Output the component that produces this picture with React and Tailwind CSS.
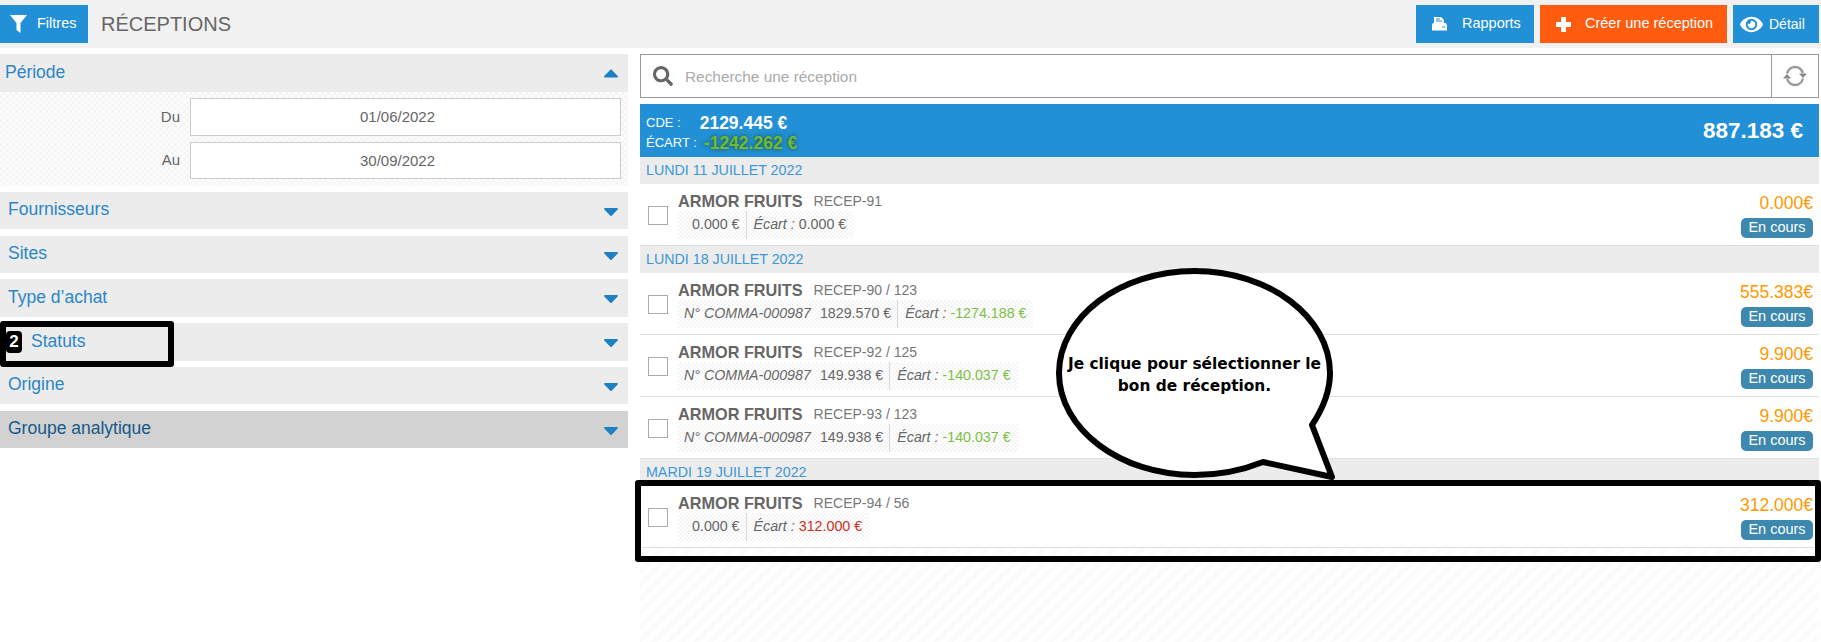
import React from 'react'
import { FaEye, FaSearch, FaCaretUp, FaCaretDown } from 'react-icons/fa'

const filters = [
    { label: 'Fournisseurs', h: 'mt-[6px] h-[37px]' },
    { label: 'Sites', h: 'mt-[7px] h-[37px]' },
    { label: 'Type d’achat', h: 'mt-[6px] h-[38px]' },
    { label: 'Statuts', h: 'mt-[6px] h-[38px]', pad: 'pl-[31px]' },
    { label: 'Origine', h: 'mt-[6px] h-[37px]' },
    { label: 'Groupe analytique', h: 'mt-[7px] h-[37px]', dark: true },
]

const groups = [
    {
        date: 'LUNDI 11 JUILLET 2022',
        rows: [{ ref: 'RECEP-91', amount: '0.000 €', ecart: '0.000 €', total: '0.000€' }],
    },
    {
        date: 'LUNDI 18 JUILLET 2022',
        rows: [
            { ref: 'RECEP-90 / 123', cde: 'N° COMMA-000987', amount: '1829.570 €', ecart: '-1274.188 €', color: 'text-[#7ac143]', total: '555.383€' },
            { ref: 'RECEP-92 / 125', cde: 'N° COMMA-000987', amount: '149.938 €', ecart: '-140.037 €', color: 'text-[#7ac143]', total: '9.900€' },
            { ref: 'RECEP-93 / 123', cde: 'N° COMMA-000987', amount: '149.938 €', ecart: '-140.037 €', color: 'text-[#7ac143]', total: '9.900€' },
        ],
    },
    {
        date: 'MARDI 19 JUILLET 2022',
        rows: [{ ref: 'RECEP-94 / 56', amount: '0.000 €', ecart: '312.000 €', color: 'text-[#c9301a]', total: '312.000€' }],
    },
]

function FunnelIcon() {
    return (
        <svg className="ml-[10px] mr-[10px] shrink-0" width="17" height="18" viewBox="0 0 17 18" fill="#fff">
            <path d="M0 0H17L10.5 8V18L6.5 15V8Z" />
        </svg>
    )
}

function ReportIcon() {
    return (
        <svg className="ml-[16px] mr-[15px] shrink-0" width="15" height="14" viewBox="0 0 15 14" fill="#fff">
            <path d="M2 0H9L12 3V7H2Z" />
            <path d="M4 2H8M4 4H10" stroke="#2290d6" strokeWidth="1" />
            <path d="M1 6H14L15 8V13.5H0V8Z" />
            <path d="M10 10H13" stroke="#2290d6" strokeWidth="1" />
        </svg>
    )
}

function PlusIcon() {
    return (
        <svg className="ml-[16px] mr-[14px] shrink-0" width="15" height="15" viewBox="0 0 15 15" fill="#fff">
            <path d="M5 0h5v5h5v5h-5v5H5v-5H0V5h5z" />
        </svg>
    )
}

function RefreshIcon() {
    return (
        <svg width="24" height="22" viewBox="0 0 24 22" fill="none">
            <path d="M4 8.5C5 4.5 8.5 2 12 2C15.5 2 18.6 4.2 19.8 8" stroke="#999" strokeWidth="2.4" />
            <path d="M20 13.5C19 17.5 15.5 20 12 20C8.5 20 5.400 17.800 4.200 14" stroke="#999" strokeWidth="2.4" />
            <path d="M16 8.500H24L20 13Z" fill="#888" />
            <path d="M0 13.500H8L4 9Z" fill="#888" />
        </svg>
    )
}

function TopButton({ icon, label, className }) {
    return (
        <button className={`flex h-[38px] items-center text-white ${className}`}>
            {icon}
            {label}
        </button>
    )
}

function DateField({ label, value, h }) {
    return (
        <div className={`flex items-center ${h}`}>
            <span className="w-[180px] text-right text-[15px]">{label}</span>
            <div className="ml-[10px] flex h-full w-[431px] items-center justify-center border border-[#ccc] bg-white pr-[16px] pt-[1px] text-[15px]">{value}</div>
        </div>
    )
}

function Row({ row }) {
    return (
        <div className="flex h-[62px] border-b border-[#e0e0e0] bg-white">
            <div className="flex w-[38px] shrink-0 items-center pl-[8px] pt-[1px]">
                <span className="h-[19px] w-[20px] border border-[#aaa] bg-white"></span>
            </div>
            <div className="flex-1 pt-[7px]">
                <div className="flex h-[20px] items-center">
                    <span className="text-[16.25px] font-bold text-[#666]">ARMOR FRUITS</span>
                    <span className="ml-[11px] text-[14px] text-[#777]">{row.ref}</span>
                </div>
                <div className="flex h-[28px] w-fit items-center bg-[repeating-conic-gradient(#f5f5f5_0_25%,#fff_0_50%)] bg-[length:4px_4px] text-[14.25px] text-[#666]">
                    {row.cde ? (
                        <span className="pl-[6px] pr-[9px] italic">{row.cde}</span>
                    ) : (
                        <span className="w-[14px]"></span>
                    )}
                    <span className="pr-[6px]">{row.amount}</span>
                    <span className="flex h-full items-center border-l border-[#d8d8d8] pl-[7px] pr-[7px]">
                        <i>Écart :</i>
                        <span className={`ml-[4px] ${row.color || ''}`}>{row.ecart}</span>
                    </span>
                </div>
            </div>
            <div className="flex shrink-0 flex-col items-end pr-[6px] pt-[8px]">
                <span className="h-[22px] text-[17.5px] leading-[22px] text-[#f90]">{row.total}</span>
                <span className="mt-[4px] flex h-[20px] w-[72px] items-center justify-center rounded-[5px] bg-[#3d88ae] text-[14.5px] text-white">En cours</span>
            </div>
        </div>
    )
}

export default function App() {
    return (
        <div className="relative h-[642px] w-[1821px] overflow-hidden bg-white font-['Liberation_Sans',Arial,sans-serif] text-[#666]">
            <header className="flex h-[48px] items-center bg-[#f1f1f1] pr-[2px]">
                <TopButton
                    icon={<FunnelIcon />}
                    label={<span className="text-[14.5px]">Filtres</span>}
                    className="w-[88px] bg-[#2290d6]"
                />
                <h1 className="ml-[13px] flex-1 text-[20px]">RÉCEPTIONS</h1>
                <TopButton
                    icon={<ReportIcon />}
                    label={<span className="text-[14.5px]">Rapports</span>}
                    className="w-[118px] bg-[#2290d6]"
                />
                <TopButton
                    icon={<PlusIcon />}
                    label={<span className="text-[14.5px]">Créer une réception</span>}
                    className="ml-[6px] w-[187px] bg-[#ff5c10]"
                />
                <TopButton
                    icon={<FaEye className="ml-[7px] mr-[6px] text-[23px]" />}
                    label={<span className="text-[14px]">Détail</span>}
                    className="ml-[6px] w-[86px] bg-[#2290d6]"
                />
            </header>

            <div className="flex">
                <aside className="w-[628px] shrink-0 pt-[6px]">
                    <div className="flex h-[38px] items-center justify-between bg-[#ececec] pl-[5px] pr-[5px] text-[17.5px] text-[#2a86c8]">
                        <span className="pb-[2px]">Période</span>
                        <FaCaretUp className="text-[24px] text-[#1f7fc0]" />
                    </div>
                    <div className="flex h-[94px] flex-col gap-[6px] bg-[repeating-conic-gradient(#f5f5f5_0_25%,#fcfcfc_0_50%)] bg-[length:6px_6px] pt-[6px]">
                        <DateField label="Du" value="01/06/2022" h="h-[38px]" />
                        <DateField label="Au" value="30/09/2022" h="h-[37px]" />
                    </div>
                    <div className="flex flex-col">
                        {filters.map((f) => (
                            <div
                                key={f.label}
                                className={`flex items-center justify-between pr-[5px] text-[17.5px] ${f.h} ${f.pad || 'pl-[8px]'} ${f.dark ? 'bg-[#d2d2d2] text-[#165a8a]' : 'bg-[#ececec] text-[#2a86c8]'}`}
                            >
                                <span className="pb-[2px]">{f.label}</span>
                                <FaCaretDown className="text-[24px] text-[#1f7fc0]" />
                            </div>
                        ))}
                    </div>
                </aside>

                <main className="ml-[12px] w-[1179px] shrink-0 pt-[6px]">
                    <div className="flex h-[44px] items-center border border-[#999] bg-white">
                        <FaSearch className="ml-[12px] text-[20px] text-[#666]" />
                        <span className="ml-[12px] flex-1 pt-[2px] text-[15.4px] text-[#aaa]">Recherche une réception</span>
                        <div className="flex h-[42px] w-[47px] items-center justify-center border-l border-[#999]">
                            <RefreshIcon />
                        </div>
                    </div>
                    <div className="mt-[6px] flex h-[53px] items-center justify-between bg-[#2290d6] pl-[6px] pr-[16px] text-white">
                        <div className="pt-[4px]">
                            <div className="flex h-[21px] items-center text-[13px]">
                                CDE :
                                <span className="ml-[19px] text-[17.5px] font-bold">2129.445 €</span>
                            </div>
                            <div className="flex h-[19px] items-center text-[13px]">
                                ÉCART :
                                <span className="ml-[7px] text-[17.5px] font-bold text-[#6fbb35] [text-shadow:0_0_4px_#1d4d24]">-1242.262 €</span>
                            </div>
                        </div>
                        <span className="text-[22.5px] font-bold">887.183 €</span>
                    </div>
                    <div className="bg-[repeating-linear-gradient(135deg,#fbfbfb_0_5px,#fff_5px_10px)]">
                        {groups.map((g) => (
                            <div key={g.date}>
                                <div className="flex h-[27px] items-center bg-[#ececec] pl-[6px] pt-[1px] text-[14.25px] text-[#3b97d8]">{g.date}</div>
                                {g.rows.map((row) => (
                                    <Row key={row.ref} row={row} />
                                ))}
                            </div>
                        ))}
                        <div className="h-[96px]"></div>
                    </div>
                </main>
            </div>

            {/* annotations drawn over the page */}
            <div className="absolute left-0 top-[321px] h-[46px] w-[174px] rounded-[3px] border-[6px] border-black"></div>
            <span className="absolute left-[6px] top-[331px] flex h-[22px] w-[16px] items-center justify-center rounded-[4px] bg-black text-[17px] font-bold text-white">2</span>
            <div className="absolute left-[635px] top-[480px] h-[82px] w-[1186px] rounded-[3px] border-[6px] border-black"></div>
            <svg className="absolute left-[1050px] top-[262px]" width="290" height="222" viewBox="1050 262 290 222">
                <path
                    d="M1312 425 C1322 410 1330 392 1330 373 C1330 317 1269 271 1194.5 271 C1120 271 1059 317 1059 373 C1059 429 1120 475 1194.5 475 C1220 475 1243 470 1263 462 L1332 477 Z"
                    fill="#fff"
                    stroke="#000"
                    strokeWidth="6"
                    strokeLinejoin="round"
                />
            </svg>
            <div className="absolute left-[1056px] top-[353px] w-[277px] text-center font-['DejaVu_Sans',sans-serif] text-[15.4px] leading-[22px] font-bold text-black">
                Je clique pour sélectionner le
                <br />
                bon de réception.
            </div>
        </div>
    )
}
